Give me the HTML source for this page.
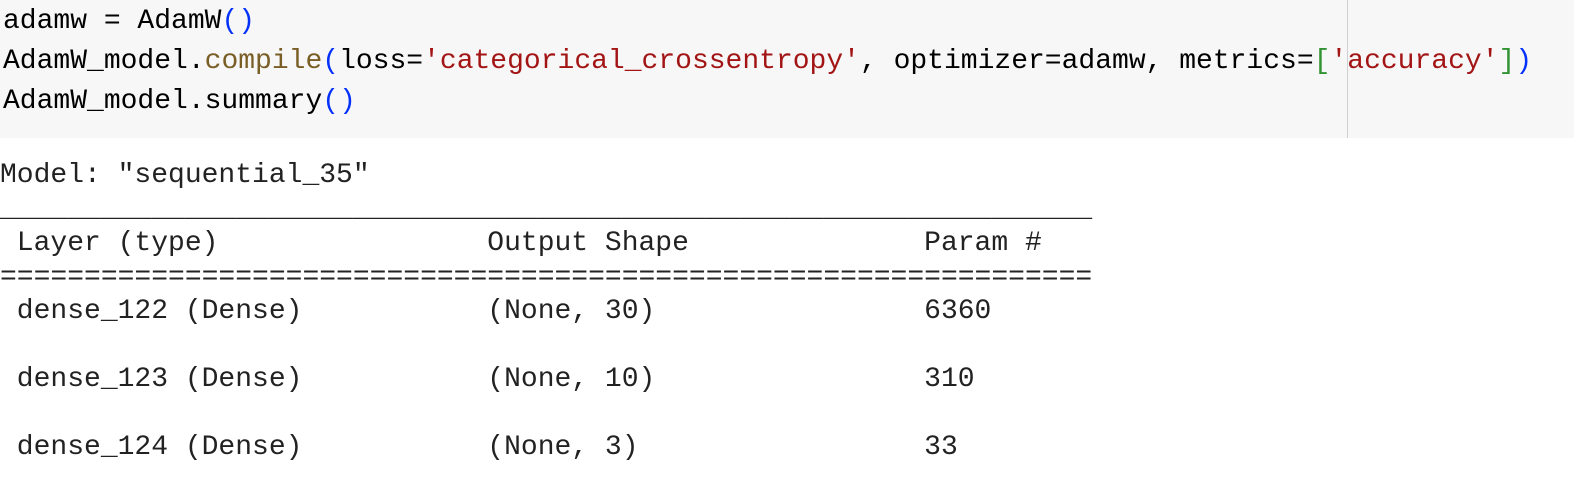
<!DOCTYPE html>
<html><head><style>
html,body{margin:0;padding:0;background:#fff;width:1574px;height:500px;overflow:hidden}
.code{position:absolute;left:0;top:0;width:1574px;height:138px;background:#f7f7f7}
.ruler{position:absolute;left:1347px;top:0;width:1px;height:138px;background:#d0d0d0}
pre{margin:0;font-family:"Liberation Mono",monospace;font-size:28px;white-space:pre}
.c{position:absolute;left:3px;top:2px;line-height:40px;color:#000}
.o{position:absolute;left:0;top:159px;line-height:34px;color:#222}
.f{color:#795e26}.s{color:#a31515}.p{color:#0431fa}.b{color:#319331}
</style></head><body>
<div class="code"></div><div class="ruler"></div>
<pre class="c">adamw = AdamW<span class="p">()</span>
AdamW_model.<span class="f">compile</span><span class="p">(</span>loss=<span class="s">'categorical_crossentropy'</span>, optimizer=adamw, metrics=<span class="b">[</span><span class="s">'accuracy'</span><span class="b">]</span><span class="p">)</span>
AdamW_model.summary<span class="p">()</span></pre>
<pre class="o">Model: "sequential_35"
_________________________________________________________________
 Layer (type)                Output Shape              Param #   
=================================================================
 dense_122 (Dense)           (None, 30)                6360      
                                                                 
 dense_123 (Dense)           (None, 10)                310       
                                                                 
 dense_124 (Dense)           (None, 3)                 33        </pre>
</body></html>
